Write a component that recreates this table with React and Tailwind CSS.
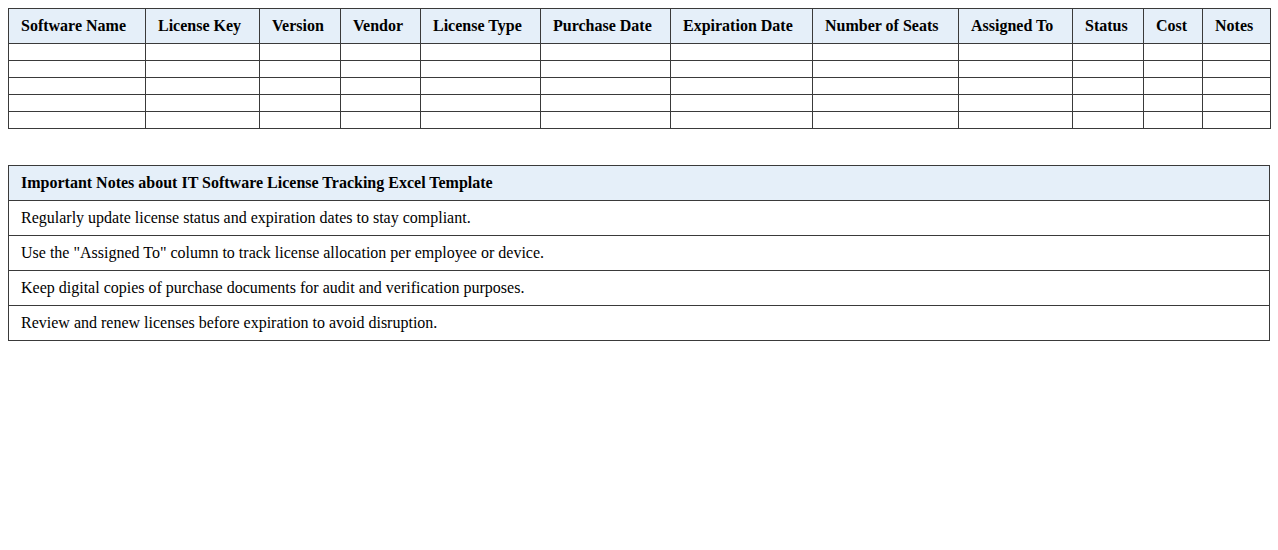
const columns = [
    { name: "Software Name", w: "w-[137px]" },
    { name: "License Key", w: "w-[114px]" },
    { name: "Version", w: "w-[81px]" },
    { name: "Vendor", w: "w-[80px]" },
    { name: "License Type", w: "w-[120px]" },
    { name: "Purchase Date", w: "w-[130px]" },
    { name: "Expiration Date", w: "w-[142px]" },
    { name: "Number of Seats", w: "w-[146px]" },
    { name: "Assigned To", w: "w-[114px]" },
    { name: "Status", w: "w-[71px]" },
    { name: "Cost", w: "w-[59px]" },
    { name: "Notes", w: "w-[68px]" },
];

const notes = [
    "Regularly update license status and expiration dates to stay compliant.",
    'Use the "Assigned To" column to track license allocation per employee or device.',
    "Keep digital copies of purchase documents for audit and verification purposes.",
    "Review and renew licenses before expiration to avoid disruption.",
];

export default function App() {
    return (
        <div className="bg-white min-h-[550px] p-2 text-black text-base font-['Liberation_Serif','Times_New_Roman',serif]">
            <table className="w-full table-fixed border-collapse">
                <colgroup>
                    {columns.map((c) => <col key={c.name} className={c.w} />)}
                </colgroup>
                <thead>
                    <tr>
                        {columns.map((c) => (
                            <th key={c.name} className="border border-[#3a3a3a] bg-[#e5eff9] px-3 py-2 leading-[18px] font-bold text-left whitespace-nowrap">
                                {c.name}
                            </th>
                        ))}
                    </tr>
                </thead>
                <tbody>
                    {[0, 1, 2, 3, 4].map((r) => (
                        <tr key={r}>
                            {columns.map((c) => (
                                <td key={c.name} className="border border-[#3a3a3a] px-3 py-2 leading-[0px]"></td>
                            ))}
                        </tr>
                    ))}
                </tbody>
            </table>

            <table className="w-full border-collapse mt-[36px]">
                <thead>
                    <tr>
                        <th className="border border-[#3a3a3a] bg-[#e5eff9] px-3 py-2 leading-[18px] font-bold text-left">
                            Important Notes about IT Software License Tracking Excel Template
                        </th>
                    </tr>
                </thead>
                <tbody>
                    {notes.map((n) => (
                        <tr key={n}>
                            <td className="border border-[#3a3a3a] px-3 py-2 leading-[18px]">{n}</td>
                        </tr>
                    ))}
                </tbody>
            </table>
        </div>
    );
}
